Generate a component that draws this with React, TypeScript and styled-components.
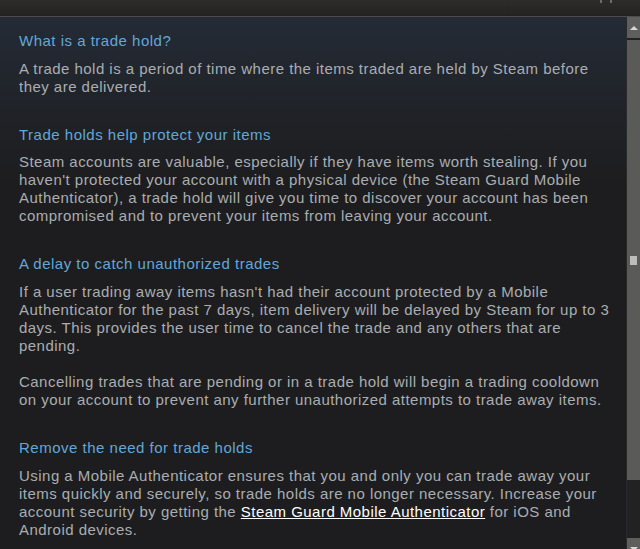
import styled, { createGlobalStyle } from 'styled-components';

const GlobalStyle = createGlobalStyle`
  html, body {
    margin: 0;
    padding: 0;
    background: #1d1d1f;
  }
`;

interface Section {
  title: string;
  paragraphs: React.ReactNode[];
}

const sections: Section[] = [
  {
    title: 'What is a trade hold?',
    paragraphs: [
      'A trade hold is a period of time where the items traded are held by Steam before they are delivered.',
    ],
  },
  {
    title: 'Trade holds help protect your items',
    paragraphs: [
      "Steam accounts are valuable, especially if they have items worth stealing. If you haven't protected your account with a physical device (the Steam Guard Mobile Authenticator), a trade hold will give you time to discover your account has been compromised and to prevent your items from leaving your account.",
    ],
  },
  {
    title: 'A delay to catch unauthorized trades',
    paragraphs: [
      "If a user trading away items hasn't had their account protected by a Mobile Authenticator for the past 7 days, item delivery will be delayed by Steam for up to 3 days. This provides the user time to cancel the trade and any others that are pending.",
      'Cancelling trades that are pending or in a trade hold will begin a trading cooldown on your account to prevent any further unauthorized attempts to trade away items.',
    ],
  },
  {
    title: 'Remove the need for trade holds',
    paragraphs: [
      <>
        Using a Mobile Authenticator ensures that you and only you can trade away your items
        quickly and securely, so trade holds are no longer necessary. Increase your account
        security by getting the <a href="#">Steam Guard Mobile Authenticator</a> for iOS and
        Android devices.
      </>,
    ],
  },
];

const Window = styled.div`
  width: 640px;
  height: 549px;
  display: flex;
  flex-direction: column;
  overflow: hidden;
  font-family: Arial, 'Liberation Sans', sans-serif;
`;

const TitleBar = styled.div`
  height: 16px;
  flex-shrink: 0;
  display: flex;
  justify-content: flex-end;
  align-items: flex-start;
  padding-right: 28px;
  background: linear-gradient(to bottom, #2e2c2b, #232221);
  border-bottom: 1px solid #4c4c4c;
`;

const CloseMark = styled.span`
  width: 12px;
  height: 3px;
  border-left: 2px solid #6b6b6b;
  border-right: 2px solid #6b6b6b;
  box-sizing: border-box;
`;

const Body = styled.div`
  flex: 1;
  display: flex;
  min-height: 0;
  overflow: hidden;
`;

const Content = styled.div`
  flex: 1;
  padding: 15px 0 0 19px;
  background: linear-gradient(to bottom, #242b36 0%, #1f2125 110px, #1d1d1f 170px, #1d1d1f 100%);
  overflow: hidden;
`;

const Block = styled.section`
  width: 600px;
  margin-bottom: 30.2px;
`;

const Heading = styled.h3`
  margin: 0 0 9.5px;
  font-size: 15px;
  line-height: 18px;
  font-weight: normal;
  letter-spacing: 0.5px;
  color: #62a7d8;
`;

const Paragraph = styled.p`
  margin: 0 0 18px;
  font-size: 15px;
  line-height: 18px;
  letter-spacing: 0.47px;
  color: #a9adb2;

  &:last-child {
    margin-bottom: 0;
  }

  a {
    color: #ffffff;
    text-decoration: underline;
  }
`;

const Scrollbar = styled.div`
  width: 13px;
  height: 542px;
  flex-shrink: 0;
  display: flex;
  flex-direction: column;
  background: #222222;
  border-left: 1px solid #2a2a2a;
`;

const ArrowButton = styled.div<{ $down?: boolean }>`
  height: 21px;
  flex-shrink: 0;
  background: #5e5e5c;
  display: flex;
  align-items: center;
  justify-content: center;

  &::after {
    content: '';
    border-left: 4px solid transparent;
    border-right: 4px solid transparent;
    ${({ $down }) =>
      $down ? 'border-top: 4px solid #d8d8d8;' : 'border-bottom: 4px solid #d8d8d8;'}
  }
`;

const Track = styled.div`
  flex: 1;
  display: flex;
  flex-direction: column;
  padding: 2px 0 58px;
`;

const Thumb = styled.div`
  flex: 1;
  background: #5a5a58;
  display: flex;
  align-items: center;
  justify-content: center;
`;

const Grip = styled.div`
  width: 7px;
  height: 9px;
  background-image: radial-gradient(circle, #bdbdbd 0.8px, transparent 1px);
  background-size: 2px 2px;
`;

export default function App() {
  return (
    <>
      <GlobalStyle />
      <Window>
        <TitleBar>
          <CloseMark />
        </TitleBar>
        <Body>
          <Content>
            {sections.map((s) => (
              <Block key={s.title}>
                <Heading>{s.title}</Heading>
                {s.paragraphs.map((p, i) => (
                  <Paragraph key={i}>{p}</Paragraph>
                ))}
              </Block>
            ))}
          </Content>
          <Scrollbar>
            <ArrowButton />
            <Track>
              <Thumb>
                <Grip />
              </Thumb>
            </Track>
            <ArrowButton $down />
          </Scrollbar>
        </Body>
      </Window>
    </>
  );
}
